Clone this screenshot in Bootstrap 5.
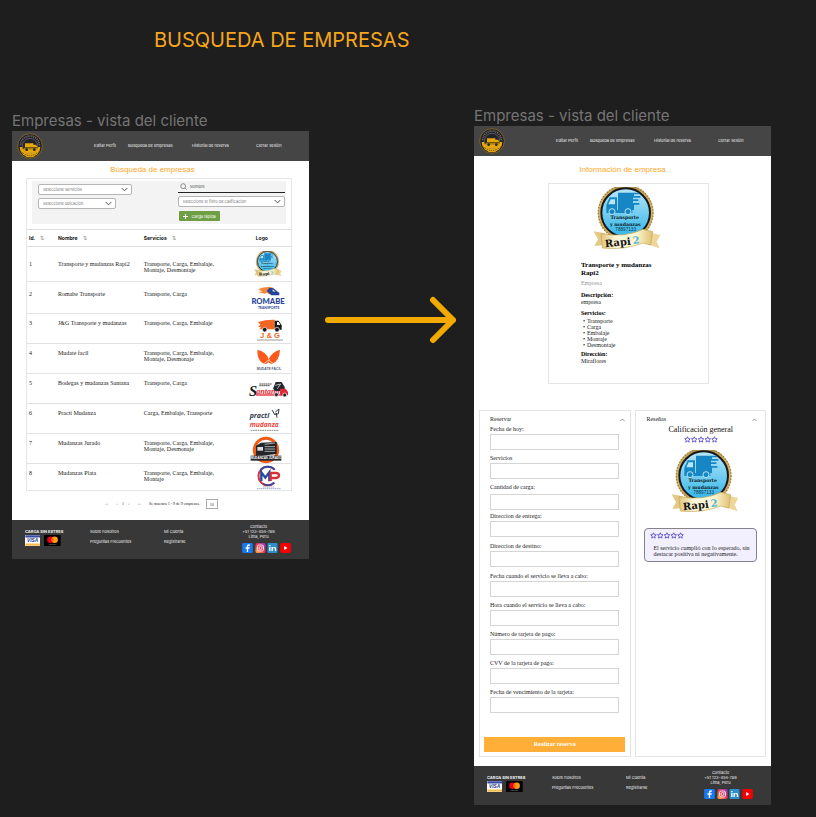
<!DOCTYPE html>
<html lang="es">
<head>
<meta charset="utf-8">
<meta name="viewport" content="width=device-width, initial-scale=1">
<title>Busqueda de empresas</title>
<link href="https://cdn.jsdelivr.net/npm/bootstrap@5.3.0/dist/css/bootstrap.min.css" rel="stylesheet">
<style>
  :root { --ui: Inter, "Liberation Sans", sans-serif; --book: "Liberation Serif", serif; --amber: #ffa726; }
  body { background: #1e1e1e; font-family: var(--ui); color: #222; font-size: 4px; line-height: 6px; }
  a { text-decoration: none; }
  .board-title { color: #f5a61d; font-size: 20px; line-height: 24px; font-weight: 400; padding: 28px 0 0 154px; }
  .board { display: grid; grid-template-columns: 297fr 165fr 297fr; padding: 54px 45px 12px 12px; align-items: start; }
  .frame-one { padding-top: 5px; }
  .frame-label { color: #757575; font-size: 15px; line-height: 20px; font-weight: 400; white-space: nowrap; }
  .flow-arrow { padding-top: 190px; }
  .flow-arrow svg { display: block; width: 100%; }

  .top-nav { background: #454545; height: 30px; display: grid; grid-template-columns: 82fr 34fr 64fr 64fr 53fr; align-items: center; }
  .top-nav a { color: #eee; white-space: nowrap; }
  .top-nav svg { display: block; width: 26px; height: 26px; margin-left: 5px; }
  .screen-title { color: var(--amber); font-family: "Liberation Sans", sans-serif; font-size: 8px; line-height: 10px; font-weight: 400; text-align: center; }

  .list-screen { padding: 4px 17px 11px 14px; }
  .list-screen .screen-title { padding-right: 13px; }
  .results { border: 1px solid #e6e6e6; margin-top: 3px; padding-top: 2px; }
  .filters { background: #f3f3f3; height: 43px; margin: 0 5px; display: grid; grid-template-columns: 94fr 45fr 107fr; padding: 0 1px 0 6px; }
  .filters .form-select { font-size: 4px; line-height: 5px; height: 11px; min-height: 0; padding: 0 14px 0 4px; border: 1px solid #b5b5b5; border-radius: 2px; color: #777; background-size: 7px 7px; background-position: right 3px center; }
  .filters .left-side { padding-top: 3px; }
  .filters .narrow { width: 83%; margin-top: 3px; }
  .search-line { border-bottom: 1px solid #222; height: 12px; }
  .search-line input { border: 0; background: transparent; font-size: 4px; line-height: 5px; padding: 0; min-height: 0; height: 10px; color: #444; box-shadow: none; }
  .search-line input::placeholder { color: #555; }
  .search-line svg { width: 7px; height: 7px; margin: 0 3px 0 2px; flex: none; }
  .right-side .form-select { margin-top: 3px; }
  .quick-load { background: #6f9f45; color: #fff; font-size: 4px; line-height: 5px; height: 10px; width: 41px; padding: 0 4px; border: 0; border-radius: 1px; margin: 4px 0 0 1px; white-space: nowrap; }
  .quick-load svg { width: 5px; height: 5px; flex: none; }

  .companies { width: 100%; table-layout: fixed; margin-top: 5px; border-top: 1px solid #ddd; border-collapse: separate; border-spacing: 0; }
  .companies th { font-weight: 700; font-size: 5px; line-height: 6px; height: 17px; padding: 0 2px; vertical-align: middle; color: #111; border-bottom: 1px solid #ddd; white-space: nowrap; }
  .companies th button { border: 0; background: none; padding: 0; margin-left: 4px; color: #888; font-size: 5px; line-height: 6px; }
  .companies td { font-family: var(--book); font-size: 6px; line-height: 6px; height: 30px; padding: 6px 2px 0; vertical-align: top; border-bottom: 1px solid #e2e2e2; }
  .companies tr:last-child td { border-bottom: 0; height: 26px; }
  .companies .first-row td { height: 35px; padding-top: 14px; }
  .companies .second-row td { height: 32px; padding-top: 9px; }
  .companies td.brand-cell, .companies .first-row td.brand-cell { padding: 0; vertical-align: middle; text-align: center; line-height: 0; }
  .brand-cell svg { display: inline-block; width: 40px; height: 26px; vertical-align: middle; overflow: visible; }
  .companies td:nth-child(3) { padding-right: 22px; }
  .companies th.brand-head { padding-left: 11px; }
  .pager { font-family: var(--book); font-size: 4px; line-height: 6px; margin-top: 8px; padding-left: 79px; }
  .pager button { border: 0; background: none; padding: 0; color: #666; font-size: 5px; line-height: 6px; }
  .pager input { width: 12px; height: 10px; border: 1px solid #aaa; border-radius: 0; padding: 0; text-align: center; font-size: 4px; line-height: 5px; color: #333; margin-left: 2px; }

  .site-footer { background: #383838; color: #eee; height: 39px; padding: 4px 18px 0 13px; display: grid; grid-template-columns: 65fr 74fr 78fr 49fr; }
  .site-footer a { color: #eee; }
  .foot-col { padding-top: 5px; line-height: 6px; white-space: nowrap; }
  .foot-col a { display: block; margin-bottom: 4px; }
  .pay svg { display: block; height: 11px; }
  .contact { text-align: center; line-height: 5px; white-space: nowrap; }
  .social svg { display: block; width: 11px; height: 10px; }

  .detail-screen { padding: 9px 5px 9px; }
  .info-card { width: 56%; margin: 8px 0 0 24%; border: 1px solid #e4e4e4; padding: 3px 33px 16px 32px; font-family: var(--book); font-size: 6px; line-height: 7px; min-height: 201px; color: #222; }
  .badge-art { display: block; width: 68px; height: 63px; margin: 0 auto; }
  .info-card .badge-art { margin-left: 12px; }
  .info-card h3 { font-size: 7px; line-height: 8px; font-weight: 700; color: #000; margin: 11px 0 0; padding-right: 16px; }
  .info-card h4 { font-size: 6px; line-height: 7px; font-weight: 700; color: #000; margin: 4px 0 0; }
  .info-card .kind { color: #999; margin: 3px 0 5px; }
  .info-card ul { padding-left: 6px; margin: 1px 0 0; line-height: 6px; list-style: none; }
  .info-card li::before { content: "•"; display: inline-block; width: 4px; margin-left: -4px; }
  .info-card h4.place { margin-top: 3px; }
  .lower { display: grid; grid-template-columns: 153fr 131fr; gap: 4px; margin-top: 26px; align-items: stretch; }
  .fold { border: 1px solid #e4e4e4; font-family: var(--book); font-size: 6px; line-height: 7px; }
  .fold-head { border: 0; background: none; padding: 0; width: 100%; font-size: 6px; line-height: 7px; color: #222; }
  .fold-head svg { width: 5px; height: 4px; }
  .booking { padding: 5px 5px 4px 4px; }
  .booking .fold-head { padding: 0 0 0 6px; }
  .booking .fields { padding: 1px 6px 0; }
  .booking label { display: block; line-height: 10px; color: #222; white-space: nowrap; }
  .booking .fields .form-control { height: 16px; min-height: 0; border: 1px solid #d5d5d5; border-radius: 0; padding: 0 3px; font-size: 6px; line-height: 7px; }
  .entry { margin-bottom: 3px; }
  .entry.tight { margin-bottom: 1px; }
  .entry.loose { margin-bottom: 4px; }
  .entry.tall label { padding-bottom: 2px; }
  .reserve { display: block; width: 100%; background: #ffae38; color: #fff; border: 0; border-radius: 0; height: 15px; padding: 0; font-size: 6px; line-height: 7px; font-weight: 700; margin-top: 24px; }
  .reviews { padding: 5px 8px; }
  .reviews .fold-head { padding-left: 2px; }
  .reviews h3 { font-size: 8px; line-height: 10px; font-weight: 400; text-align: center; margin: 2px 0 1px; color: #111; }
  .reviews .badge-art { margin: 7px 0 0 27px; }
  .stars { display: block; width: 34px; height: 7px; }
  .opinion { background: #f2efff; border: 1px solid #85818f; border-radius: 4px; margin-top: 15px; padding: 3px 5px; height: 34px; line-height: 6px; }
  .opinion p { margin: 6px 0 0 3px; }
</style>
<script src="https://cdn.jsdelivr.net/npm/bootstrap@5.3.0/dist/js/bootstrap.bundle.min.js"></script>
</head>
<body>
<svg width="0" height="0" class="position-absolute" aria-hidden="true">
  <defs>
    <linearGradient id="sky" x1="0" y1="0" x2="0" y2="1"><stop offset="0" stop-color="#b9e6f8"/><stop offset="1" stop-color="#31b6ea"/></linearGradient>
    <linearGradient id="gold" x1="0" y1="0" x2="1" y2="0"><stop offset="0" stop-color="#d9b56a"/><stop offset=".5" stop-color="#a5823f"/><stop offset="1" stop-color="#d9b56a"/></linearGradient>
    <linearGradient id="band" x1="0" y1="0" x2="1" y2="0"><stop offset="0" stop-color="#e2c57a"/><stop offset=".3" stop-color="#fdf8dd"/><stop offset=".7" stop-color="#fbf3cf"/><stop offset="1" stop-color="#dfc070"/></linearGradient>
    <linearGradient id="insta" x1="0" y1="1" x2="1" y2="0"><stop offset="0" stop-color="#fdc04b"/><stop offset=".45" stop-color="#ee3b55"/><stop offset="1" stop-color="#8a3ac8"/></linearGradient>
    <symbol id="rapi" viewBox="0 0 204 189">
      <circle cx="98" cy="77" r="78" fill="none" stroke="url(#gold)" stroke-width="11"/>
      <circle cx="98" cy="77" r="82" fill="none" stroke="#9b7a3c" stroke-width="4" stroke-dasharray="4 5"/>
      <circle cx="98" cy="77" r="73" fill="url(#sky)" stroke="#15191d" stroke-width="6"/>
      <path d="M75 17h63v5h-15v5h19v5h-22v5h16v5h-16v6h19v5h-16v16H75z" fill="#1686c4"/>
      <path d="M50 31h22v38h46v9H40V53z" fill="#1686c4"/><path d="M53 37h13v15H46z" fill="#b9e6f8"/>
      <circle cx="57" cy="74" r="9" fill="#1686c4" stroke="#b9e6f8" stroke-width="3"/><circle cx="105" cy="74" r="9" fill="#1686c4" stroke="#b9e6f8" stroke-width="3"/>
      <g font-family="DejaVu Serif, serif" font-weight="700" font-size="14" text-anchor="middle" fill="#0d1b22"><text x="95" y="97">Transporte</text><text x="97" y="116">y mudanzas</text></g>
      <text x="98" y="132" font-family="Liberation Sans, sans-serif" font-size="14" text-anchor="middle" fill="#0d3347">78897133</text>
      <path d="M2 133l35 6-3 35-30 3 11-20z" fill="#e3c987"/><path d="M202 144l-36-8-2 36 36 12-9-20z" fill="#ecd699"/>
      <path d="M24 140Q95 153 150 127l29 7-6 40-24-6Q95 190 28 183z" fill="url(#band)" stroke="#c7a451" stroke-width="2"/>
      <g font-family="DejaVu Serif, serif" font-weight="700" font-size="30" transform="rotate(-6 90 170)"><text x="36" y="175" fill="#121212">Rapi</text><text x="120" y="174" fill="#4cb7dd">2</text></g>
    </symbol>
    <symbol id="site-logo" viewBox="0 0 78 78">
      <circle cx="39" cy="39" r="37" fill="#25232a" stroke="#a27a18" stroke-width="2"/>
      <path d="M8 42a31 31 0 0 0 62 0z" fill="#e6a80b"/>
      <circle cx="39" cy="39" r="23" fill="#25232a" stroke="#bbb" stroke-width="1"/>
      <path d="M11 37a28 28 0 0 1 56 0" fill="none" stroke="#77747c" stroke-width="5" stroke-dasharray="3 3"/>
      <path d="M24 31h25v4h8l4 6v8H20v-5h4z" fill="#e6a80b"/><path d="M16 43h46v3H16z" fill="#3a2e13"/>
      <path d="M17 49h44q-6 13-22 13T17 49z" fill="#e6a80b"/>
      <circle cx="29" cy="50" r="4" fill="#25232a"/><circle cx="52" cy="50" r="4" fill="#25232a"/>
      <path d="M14 57q25 22 50 0" fill="none" stroke="#4b380a" stroke-width="3" stroke-dasharray="3 3"/>
    </symbol>
    <symbol id="star" viewBox="0 0 14 14"><path d="M7 1.5l1.6 3.8 4 .3-3 2.7.9 4L7 10.200l-3.500 2.100.9-4-3-2.700 4-.3z" fill="none" stroke="#5548cf" stroke-width="1.700"/></symbol>
    <symbol id="five" viewBox="0 0 68 14"><use href="#star" width="14" height="14"/><use href="#star" x="13.500" width="14" height="14"/><use href="#star" x="27" width="14" height="14"/><use href="#star" x="40.500" width="14" height="14"/><use href="#star" x="54" width="14" height="14"/></symbol>
    <symbol id="visa" viewBox="0 0 45 32"><path d="M0 0h45v32H0z" fill="#fff"/><path d="M1 1h43v6H1z" fill="#354aa0"/><path d="M1 25h43v6H1z" fill="#f4bd4e"/><text x="22" y="21" font-family="Liberation Sans, sans-serif" font-weight="700" font-style="italic" font-size="14" text-anchor="middle" fill="#26388c">VISA</text></symbol>
    <symbol id="mc" viewBox="0 0 52 34"><rect width="52" height="34" rx="3" fill="#000"/><circle cx="20" cy="15" r="10" fill="#eb001b"/><circle cx="33" cy="15" r="10" fill="#f79e1b"/><path d="M26.500 7.500a10 10 0 0 1 0 15 10 10 0 0 1 0-15z" fill="#ff5f00"/><path d="M15 29h23" stroke="#aaa" stroke-width="2" stroke-dasharray="2 1"/></symbol>
    <symbol id="fb" viewBox="0 0 32 30"><rect width="32" height="30" rx="4" fill="#1877f2"/><path d="M14 27V17h-4v-4h4v-3q0-6 6-6h3v4h-2q-3 0-3 3v2h5l-1 4h-4v10z" fill="#fff"/></symbol>
    <symbol id="ig" viewBox="0 0 32 30"><rect x="1" width="30" height="30" rx="5" fill="url(#insta)"/><rect x="7" y="6" width="18" height="18" rx="5" fill="none" stroke="#fff" stroke-width="2.500"/><circle cx="16" cy="15" r="4.500" fill="none" stroke="#fff" stroke-width="2.500"/><circle cx="21.500" cy="9.500" r="1.300" fill="#fff"/></symbol>
    <symbol id="li" viewBox="0 0 32 30"><rect x="1" width="30" height="30" rx="3" fill="#2d8ecb"/><path d="M6 12h4v12H6zM6 6h4v4H6zM13 12h4v2q2-2 5-2 5 0 5 6v6h-4v-6q0-3-3-3t-3 3v6h-4z" fill="#fff"/></symbol>
    <symbol id="yt" viewBox="0 0 32 30"><rect width="32" height="30" rx="5" fill="#f40000"/><path d="M12 9l10 6-10 6z" fill="#fff"/></symbol>
    <symbol id="up" viewBox="0 0 10 8"><path d="M1 6l4-4 4 4" fill="none" stroke="#777" stroke-width="1.500"/></symbol>
  </defs>
</svg>

<h1 class="board-title mb-0">BUSQUEDA DE EMPRESAS</h1>
<main class="board">
  <section class="frame-one">
    <h2 class="frame-label mb-0">Empresas - vista del cliente</h2>
    <div class="bg-white">
      <nav class="top-nav" aria-label="Principal">
        <svg><use href="#site-logo"/></svg>
        <a href="#">Editar Perfil</a><a href="#">Busqueda de empresas</a><a href="#">Historial de reserva</a><a href="#">Cerrar sesión</a>
      </nav>
      <div class="list-screen">
        <h3 class="screen-title mb-0">Búsqueda de empresas</h3>
        <div class="results">
          <form class="filters">
            <div class="left-side">
              <select class="form-select" aria-label="Servicios"><option>Seleccione servicios</option></select>
              <select class="form-select narrow" aria-label="Ubicación"><option>Seleccione ubicación</option></select>
            </div>
            <div></div>
            <div class="right-side">
              <div class="search-line d-flex align-items-center">
                <svg viewBox="0 0 20 20"><circle cx="9" cy="9" r="7" fill="none" stroke="#666" stroke-width="2"/><path d="M14 14l5 5" stroke="#666" stroke-width="2"/></svg>
                <input class="form-control" type="text" placeholder="Nombre" aria-label="Nombre">
              </div>
              <select class="form-select" aria-label="Calificación"><option>Seleccione el filtro de calificacion</option></select>
              <button type="button" class="quick-load btn d-flex align-items-center gap-1"><svg viewBox="0 0 10 10"><path d="M5 0v10M0 5h10" stroke="#fff" stroke-width="2"/></svg>Carga rápida</button>
            </div>
          </form>
          <table class="companies">
            <colgroup><col style="width:11%"><col style="width:32.500%"><col style="width:39%"><col></colgroup>
            <thead><tr><th>Id. <button type="button" aria-label="Ordenar por id">⇅</button></th><th>Nombre <button type="button" aria-label="Ordenar por nombre">⇅</button></th><th>Servicios <button type="button" aria-label="Ordenar por servicios">⇅</button></th><th class="brand-head">Logo</th></tr></thead>
            <tbody>
              <tr class="first-row"><td>1</td><td>Transporte y mudanzas Rapi2</td><td>Transporte, Carga, Embalaje, Montaje, Desmontaje</td><td class="brand-cell"><svg><use href="#rapi"/></svg></td></tr>
              <tr class="second-row"><td>2</td><td>Romabe Transporte</td><td>Transporte, Carga</td><td class="brand-cell">
                <svg viewBox="0 0 120 78"><path d="M32 12q24-10 44-4l4 20H62q-3-9-12-2l-20-5 14-2-12-5z" fill="#f58634"/><path d="M64 8q16 0 22 10l8 5v8H70L56 18z" fill="#26439b"/><path d="M74 13l9 7-9-1z" fill="#fff"/><text x="60" y="58" font-family="Lato, sans-serif" font-weight="900" font-size="23" text-anchor="middle" fill="#253f96">ROMABE</text><text x="62" y="71" font-family="Lato, sans-serif" font-weight="700" font-size="10" text-anchor="middle" fill="#253f96">TRANSPORTE</text></svg></td></tr>
              <tr><td>3</td><td>J&amp;G Transporte y mudanzas</td><td>Transporte, Carga, Embalaje</td><td class="brand-cell">
                <svg viewBox="0 0 120 78"><path d="M30 18q25-8 50-7v29H34l5-7h-9l7-7z" fill="#f26522"/><path d="M80 14h12l9 14v13H80z" fill="#15171a"/><path d="M87 18h5l5 9H87z" fill="#fff"/><g fill="#15171a" stroke="#fff" stroke-width="2"><circle cx="50" cy="41" r="7"/><circle cx="87" cy="41" r="7"/></g><text x="66" y="66" font-family="Liberation Sans, sans-serif" font-weight="700" font-size="23" text-anchor="middle" fill="#f26522">J &amp; G</text><path d="M28 72h76" stroke="#666" stroke-width="3" stroke-dasharray="4 2"/></svg></td></tr>
              <tr><td>4</td><td>Mudate facil</td><td>Transporte, Carga, Embalaje, Montaje, Desmonaje</td><td class="brand-cell">
                <svg viewBox="0 0 120 78"><path d="M28 11q29 7 34 29Q70 18 96 11q-1 33-24 43-10-3-11-5-5 7-14 4Q27 43 28 11z" fill="#fa5a1b"/><path d="M65 40L45 55M61 42l20 14" stroke="#fff" stroke-width="2"/><text x="63" y="71" font-family="Liberation Sans, sans-serif" font-weight="700" font-size="10" text-anchor="middle" fill="#555d80">MUDATE FÁCIL</text></svg></td></tr>
              <tr><td>5</td><td>Bodegas y mudanzas Santana</td><td>Transporte, Carga</td><td class="brand-cell">
                <svg viewBox="0 0 120 78"><text x="3" y="59" font-family="Liberation Serif, serif" font-style="italic" font-weight="700" font-size="44" fill="#17191d">S</text><text x="25" y="53" font-family="Liberation Serif, serif" font-style="italic" font-weight="700" font-size="24" fill="#e52635">antana</text><path d="M24 57h90" stroke="#e52635" stroke-width="4"/><path d="M75 38l8-20h18l9 15v12H81z" fill="#24272b"/><path d="M96 38h17l7 10v10H96z" fill="#e52635"/><path d="M82 28l16-4-10 14" fill="none" stroke="#fff" stroke-width="2"/><g fill="#24272b" stroke="#fff" stroke-width="2"><circle cx="85" cy="56" r="6"/><circle cx="110" cy="57" r="6"/></g><path d="M34 24h38M34 29h32" stroke="#555" stroke-width="3" stroke-dasharray="5 1"/></svg></td></tr>
              <tr><td>6</td><td>Practi Mudanza</td><td>Carga, Embalaje, Transporte</td><td class="brand-cell">
                <svg viewBox="0 0 120 78"><g font-family="Open Sans, sans-serif" font-weight="700" font-style="italic"><text x="5" y="36" font-size="21" fill="#32374d">practi</text><text x="5" y="64" font-size="20" fill="#ee4740">mudanza</text></g><path d="M72 12l9 15 4-6 2 14M82 18l11-9-2 14-7 3" fill="none" stroke="#32374d" stroke-width="3"/><path d="M8 73h85" stroke="#888" stroke-width="3" stroke-dasharray="5 2"/></svg></td></tr>
              <tr><td>7</td><td>Mudanzas Jurado</td><td>Transporte, Carga, Embalaje, Montaje, Desmonaje</td><td class="brand-cell">
                <svg viewBox="0 0 120 78"><circle cx="54" cy="42" r="35" fill="#fff" stroke="#f35a16" stroke-width="9"/><path d="M24 29l15-9 47-2v36l-45 5H24z" fill="#22252a"/><path d="M28 33h17v11H28z" fill="#ddd"/><path d="M50 25l31-4M50 32h31M50 39h31M50 46h31" stroke="#eee" stroke-width="2"/><path d="M8 59h92v15H8z" fill="#24272b"/><text x="54" y="70" font-family="Liberation Sans, sans-serif" font-weight="700" font-size="9" text-anchor="middle" fill="#fff">MUDANZAS JURADO</text></svg></td></tr>
              <tr><td>8</td><td>Mudanzas Plata</td><td>Transporte, Carga, Embalaje, Montaje</td><td class="brand-cell">
                <svg viewBox="0 0 120 78"><path d="M80 17A28 28 0 1 0 79 56" fill="none" stroke="#d9313c" stroke-width="6"/><path d="M37 19A28 28 0 0 1 80 17M79 56A28 28 0 0 1 45 59" fill="none" stroke="#2e4aa4" stroke-width="5"/><path d="M40 51V25l12 16 12-16v27" fill="none" stroke="#234b9f" stroke-width="7"/><path d="M68 51V27h16q9 0 9 7t-9 8H70" fill="none" stroke="#d9313c" stroke-width="7"/><path d="M45 69h34M27 74h72" stroke="#7b89ba" stroke-width="2" stroke-dasharray="5 1"/></svg></td></tr>
            </tbody>
          </table>
        </div>
        <div class="pager d-flex align-items-center">
          <button type="button" class="me-2" aria-label="Primera página">‹‹</button>
          <button type="button" class="me-1" aria-label="Anterior">‹</button><span>1</span><button type="button" class="ms-1 me-2" aria-label="Siguiente">›</button>
          <button type="button" class="me-2" aria-label="Última página">››</button>
          <span class="me-1">Se muestra 1 - 9 de 9 empresas.</span>
          <input type="text" value="10" aria-label="Empresas por página">
        </div>
      </div>
      <footer class="site-footer">
        <div class="foot-col"><strong>CARGA SIN ESTRES</strong><div class="pay d-flex gap-1"><svg viewBox="0 0 45 32"><use href="#visa"/></svg><svg viewBox="0 0 52 34"><use href="#mc"/></svg></div></div>
        <div class="foot-col"><a href="#">Sobre nosotros</a><a href="#">Preguntas Frecuentes</a></div>
        <div class="foot-col"><a href="#">Mi Cuenta</a><a href="#">Registrarse</a></div>
        <div class="contact"><div class="pe-3">Contacto<br>+51 123-456-789<br>Lima, Peru</div><div class="social d-flex justify-content-between mt-1"><a href="#" aria-label="Facebook"><svg><use href="#fb"/></svg></a><a href="#" aria-label="Instagram"><svg><use href="#ig"/></svg></a><a href="#" aria-label="LinkedIn"><svg><use href="#li"/></svg></a><a href="#" aria-label="YouTube"><svg><use href="#yt"/></svg></a></div></div>
      </footer>
    </div>
  </section>

  <div class="flow-arrow"><svg viewBox="0 0 165 48" aria-hidden="true"><path d="M19 24h125M124 4l20 20-20 20" fill="none" stroke="#f2a900" stroke-width="6" stroke-linecap="round" stroke-linejoin="round"/></svg></div>

  <section>
    <h2 class="frame-label mb-0">Empresas - vista del cliente</h2>
    <div class="bg-white">
      <nav class="top-nav" aria-label="Principal, detalle">
        <svg><use href="#site-logo"/></svg>
        <a href="#">Editar Perfil</a><a href="#">Busqueda de empresas</a><a href="#">Historial de reserva</a><a href="#">Cerrar sesión</a>
      </nav>
      <div class="detail-screen">
        <h3 class="screen-title mb-0">Información de empresa</h3>
        <article class="info-card">
          <svg class="badge-art"><use href="#rapi"/></svg>
          <h3>Transporte y mudanzas Rapi2</h3>
          <p class="kind">Empresa</p>
          <h4>Descripción:</h4><p class="mb-0">empresa</p>
          <h4>Servicios:</h4>
          <ul><li>Transporte</li><li>Carga</li><li>Embalaje</li><li>Montaje</li><li>Desmontaje</li></ul>
          <h4 class="place">Dirección:</h4><p class="mb-0">Miraflores</p>
        </article>
        <div class="lower">
          <form class="fold booking">
            <button type="button" class="fold-head d-flex justify-content-between align-items-center">Reservar<svg><use href="#up"/></svg></button>
            <div class="fields">
              <div class="entry"><label for="f1">Fecha de hoy:</label><input id="f1" class="form-control" type="text"></div>
              <div class="entry"><label for="f2">Servicios</label><input id="f2" class="form-control" type="text"></div>
              <div class="entry tall tight"><label for="f3">Cantidad de carga:</label><input id="f3" class="form-control" type="text"></div>
              <div class="entry loose"><label for="f4">Direccion de entrega:</label><input id="f4" class="form-control" type="text"></div>
              <div class="entry loose"><label for="f5">Direccion de destino:</label><input id="f5" class="form-control" type="text"></div>
              <div class="entry"><label for="f6">Fecha cuando el servicio se lleva a cabo:</label><input id="f6" class="form-control" type="text"></div>
              <div class="entry"><label for="f7">Hora cuando el servicio se lleva a cabo:</label><input id="f7" class="form-control" type="text"></div>
              <div class="entry"><label for="f8">Número de tarjeta de pago:</label><input id="f8" class="form-control" type="text"></div>
              <div class="entry"><label for="f9">CVV de la tarjeta de pago:</label><input id="f9" class="form-control" type="text"></div>
              <div class="entry"><label for="f10">Fecha de vencimiento de la tarjeta:</label><input id="f10" class="form-control" type="text"></div>
            </div>
            <button type="button" class="reserve btn">Realizar reserva</button>
          </form>
          <section class="fold reviews">
            <button type="button" class="fold-head d-flex justify-content-between align-items-center">Reseñas<svg><use href="#up"/></svg></button>
            <h3>Calificación general</h3>
            <svg class="stars mx-auto"><use href="#five"/></svg>
            <svg class="badge-art"><use href="#rapi"/></svg>
            <div class="opinion"><svg class="stars"><use href="#five"/></svg><p>El servicio cumplió con lo esperado, sin destacar positiva ni negativamente.</p></div>
          </section>
        </div>
      </div>
      <footer class="site-footer">
        <div class="foot-col"><strong>CARGA SIN ESTRES</strong><div class="pay d-flex gap-1"><svg viewBox="0 0 45 32"><use href="#visa"/></svg><svg viewBox="0 0 52 34"><use href="#mc"/></svg></div></div>
        <div class="foot-col"><a href="#">Sobre nosotros</a><a href="#">Preguntas Frecuentes</a></div>
        <div class="foot-col"><a href="#">Mi Cuenta</a><a href="#">Registrarse</a></div>
        <div class="contact"><div class="pe-3">Contacto<br>+51 123-456-789<br>Lima, Peru</div><div class="social d-flex justify-content-between mt-1"><a href="#" aria-label="Facebook"><svg><use href="#fb"/></svg></a><a href="#" aria-label="Instagram"><svg><use href="#ig"/></svg></a><a href="#" aria-label="LinkedIn"><svg><use href="#li"/></svg></a><a href="#" aria-label="YouTube"><svg><use href="#yt"/></svg></a></div></div>
      </footer>
    </div>
  </section>
</main>
</body>
</html>
